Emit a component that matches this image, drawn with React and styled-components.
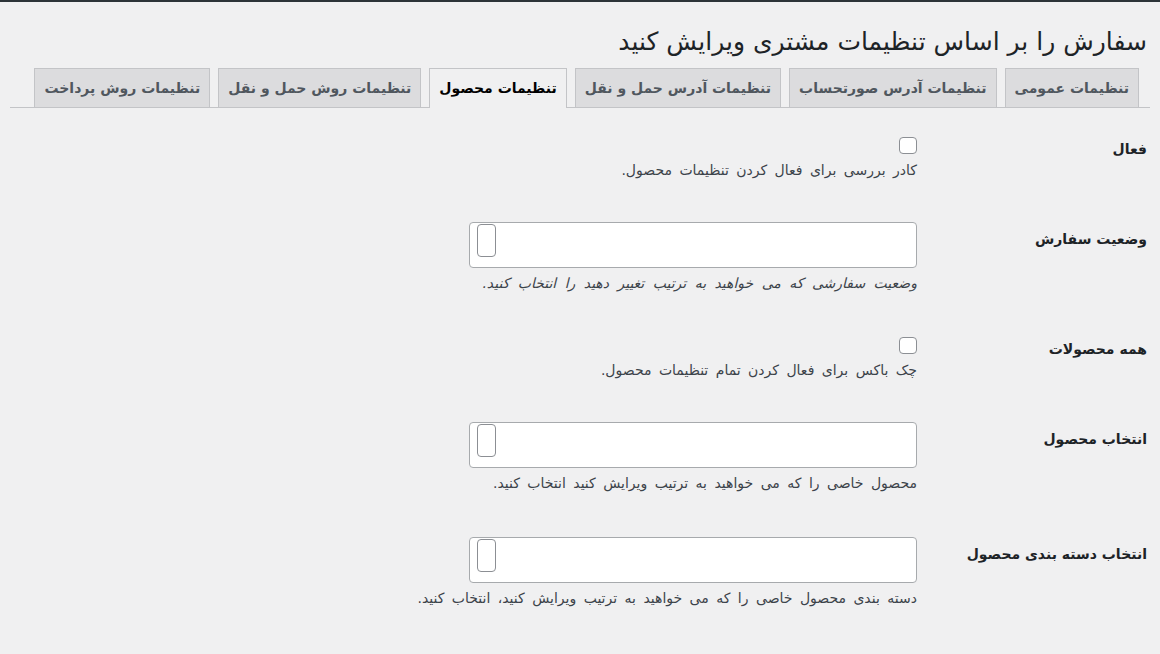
import React from "react";
import styled, { createGlobalStyle } from "styled-components";

const GlobalStyle = createGlobalStyle`
  body {
    margin: 0;
    background: #f0f0f1;
    font-family: "DejaVu Sans", "Noto Sans", sans-serif;
    color: #3c434a;
    direction: rtl;
  }
`;

const tabs = [
  "تنظیمات عمومی",
  "تنظیمات آدرس صورتحساب",
  "تنظیمات آدرس حمل و نقل",
  "تنظیمات محصول",
  "تنظیمات روش حمل و نقل",
  "تنظیمات روش پرداخت",
];

const fields = [
  { label: "فعال", type: "checkbox", desc: "کادر بررسی برای فعال کردن تنظیمات محصول." },
  {
    label: "وضعیت سفارش",
    type: "select",
    desc: "وضعیت سفارشی که می خواهید به ترتیب تغییر دهید را انتخاب کنید.",
    italic: true,
  },
  { label: "همه محصولات", type: "checkbox", desc: "چک باکس برای فعال کردن تمام تنظیمات محصول." },
  { label: "انتخاب محصول", type: "select", desc: "محصول خاصی را که می خواهید به ترتیب ویرایش کنید انتخاب کنید." },
  {
    label: "انتخاب دسته بندی محصول",
    type: "select",
    desc: "دسته بندی محصول خاصی را که می خواهید به ترتیب ویرایش کنید، انتخاب کنید.",
  },
];

export default function App() {
  return (
    <Page>
      <GlobalStyle />
      <Wrap>
        <Title>سفارش را بر اساس تنظیمات مشتری ویرایش کنید</Title>
        <TabBar>
          {tabs.map((t, i) => (
            <Tab key={t} active={i === 3}>
              {t}
            </Tab>
          ))}
        </TabBar>
        <Form>
          {fields.map((f) => (
            <Row key={f.label} tall={f.type === "select"}>
              <Label tall={f.type === "select"}>{f.label}</Label>
              <Field>
                {f.type === "checkbox" ? (
                  <Checkbox type="checkbox" />
                ) : (
                  <SelectBox>
                    <SearchField />
                  </SelectBox>
                )}
                <Description italic={f.italic} tall={f.type === "select"}>
                  {f.desc}
                </Description>
              </Field>
            </Row>
          ))}
        </Form>
      </Wrap>
    </Page>
  );
}

const Page = styled.div`
  border-top: 2px solid #2c3338;
  min-height: 652px;
`;

const Wrap = styled.div`
  padding: 0 10px;
`;

const Title = styled.h1`
  margin: 0;
  padding: 21px 3px 8px 0;
  font-size: 25px;
  font-weight: 400;
  line-height: 37px;
  color: #1d2327;
`;

const TabBar = styled.div`
  display: flex;
  gap: 8px;
  padding-right: 11px;
  border-bottom: 1px solid #c3c4c7;
`;

const Tab = styled.div`
  height: 38px;
  padding: 0 9px;
  display: flex;
  align-items: center;
  font-size: 14px;
  font-weight: 700;
  border: 1px solid #c3c4c7;
  border-bottom: none;
  margin-bottom: ${({ active }) => (active ? "-1px" : "0")};
  padding-bottom: ${({ active }) => (active ? "1px" : "0")};
  background: ${({ active }) => (active ? "#f0f0f1" : "#dcdcde")};
  color: ${({ active }) => (active ? "#000" : "#50575e")};
`;

const Form = styled.div`
  padding-top: 14px;
`;

const Row = styled.div`
  display: flex;
  height: ${({ tall }) => (tall ? "115px" : "85px")};
  box-sizing: border-box;
  padding-top: 15px;
`;

const Label = styled.div`
  width: 233px;
  flex: none;
  padding: ${({ tall }) => (tall ? "7px" : "2px")} 3px 0 0;
  box-sizing: border-box;
  font-size: 14px;
  font-weight: 700;
  line-height: 20px;
  color: #1d2327;
`;

const Field = styled.div`
  display: flex;
  flex-direction: column;
  align-items: flex-start;
`;

const Checkbox = styled.input`
  appearance: none;
  margin: 0;
  width: 18px;
  height: 17px;
  border: 1px solid #8c8f94;
  border-radius: 4px;
  background: #fff;
  box-sizing: border-box;
`;

const SelectBox = styled.div`
  width: 448px;
  height: 46px;
  box-sizing: border-box;
  border: 1px solid #a7aaad;
  border-radius: 4px;
  background: #fff;
  display: flex;
  align-items: flex-start;
  padding: 0 420px 0 0;
`;

const SearchField = styled.div`
  width: 19px;
  height: 33px;
  box-sizing: border-box;
  margin: 1px 0 0 0;
  border: 1px solid #8c8f94;
  border-radius: 4px;
  background: #fff;
  flex: none;
`;

const Description = styled.p`
  margin: ${({ tall }) => (tall ? "4px" : "5px")} 0 0;
  font-size: 14px;
  line-height: 22px;
  word-spacing: ${({ italic }) => (italic ? "4px" : "3px")};
  color: #3c434a;
  font-style: ${({ italic }) => (italic ? "italic" : "normal")};
`;
